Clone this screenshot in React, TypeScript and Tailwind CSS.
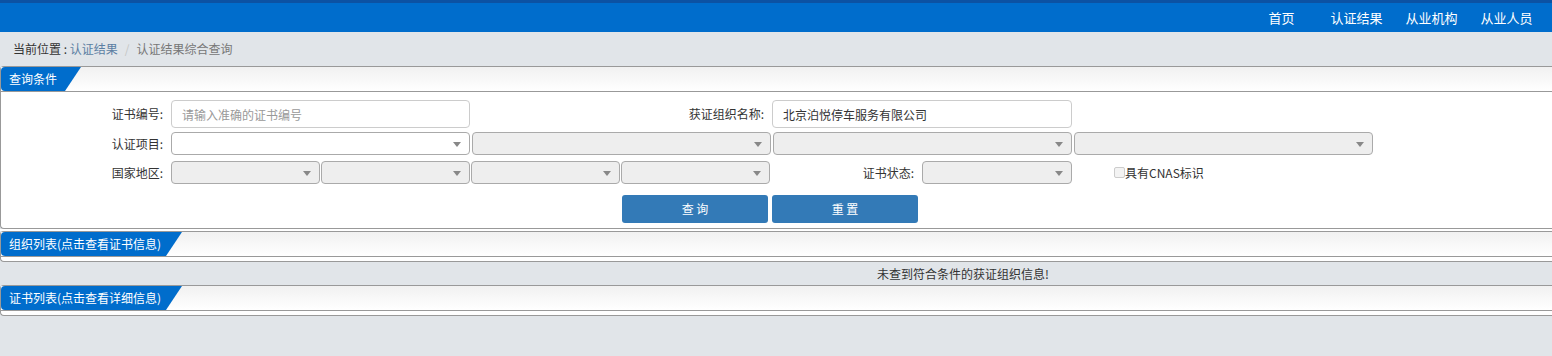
const font = { fontFamily: '"Noto Sans CJK SC", "Liberation Sans", sans-serif' }

function Select({ width, disabled = true }: { width: string; disabled?: boolean }) {
  return (
    <div
      className={`relative h-[23px] shrink-0 rounded-[4px] border border-[#aaa] ${width} ${
        disabled ? 'bg-[#eee]' : 'bg-white'
      }`}
    >
      <span className="absolute right-[8px] top-[9px] h-0 w-0 border-x-[4px] border-t-[5px] border-x-transparent border-t-[#888]" />
    </div>
  )
}

function PanelHeader({ title, tabWidth }: { title: string; tabWidth: string }) {
  return (
    <div className="flex h-[25px] border-b border-[#999] bg-gradient-to-b from-[#f1f1f1] to-white">
      <div
        className={`flex h-full items-center rounded-l-[4px] bg-[#006dcc] pl-[8px] text-[12px] text-white [clip-path:polygon(0_0,100%_0,calc(100%-16px)_100%,0_100%)] ${tabWidth}`}
      >
        {title}
      </div>
    </div>
  )
}

export default function App() {
  return (
    <div className="min-h-[356px] w-full bg-[#e1e5e9] text-[12px] text-[#333]" style={font}>
      <header className="border-t-[3px] border-[#0c52a3] bg-[#006dcc]">
        <nav className="flex h-[29px] items-center justify-end pr-[8px] text-[13px] text-white">
          <a className="w-[75px] text-center">首页</a>
          <a className="w-[75px] text-center">认证结果</a>
          <a className="w-[75px] text-center">从业机构</a>
          <a className="w-[75px] text-center">从业人员</a>
        </nav>
      </header>

      <div className="flex h-[34px] items-center pl-[13px] text-[12px]">
        <span className="text-[#333]">当前位置 :&nbsp;</span>
        <a className="text-[#5c7fa3]">认证结果</a>
        <span className="px-[7px] text-[#c5c5c5]">/</span>
        <span className="text-[#777]">认证结果综合查询</span>
      </div>

      <section className="rounded-l-[4px] border-y border-l border-[#999] bg-white">
        <PanelHeader title="查询条件" tabWidth="w-[80px]" />
        <div className="flex flex-col pb-[5px] pt-[8px]">
          <div className="flex h-[28px] items-center">
            <label className="w-[162px] text-right">证书编号:</label>
            <input
              className="ml-[8px] h-[28px] w-[299px] rounded-[4px] border border-[#ccc] px-[10px] text-[12px] outline-none placeholder:text-[#999]"
              placeholder="请输入准确的证书编号"
            />
            <label className="w-[294px] text-right">获证组织名称:</label>
            <input
              className="ml-[8px] h-[28px] w-[300px] rounded-[4px] border border-[#ccc] px-[10px] text-[12px] text-[#333] outline-none"
              defaultValue="北京泊悦停车服务有限公司"
            />
          </div>

          <div className="mt-[4px] flex items-center">
            <label className="w-[162px] text-right">认证项目:</label>
            <div className="ml-[8px] flex gap-[2px]">
              <Select width="w-[299px]" disabled={false} />
              <Select width="w-[299px]" />
              <Select width="w-[299px]" />
              <Select width="w-[299px]" />
            </div>
          </div>

          <div className="mt-[6px] flex items-center">
            <label className="w-[162px] text-right">国家地区:</label>
            <div className="ml-[8px] flex gap-[1px]">
              <Select width="w-[149px]" />
              <Select width="w-[149px]" />
              <Select width="w-[149px]" />
              <Select width="w-[149px]" />
            </div>
            <label className="w-[144px] text-right">证书状态:</label>
            <div className="ml-[8px]">
              <Select width="w-[150px]" />
            </div>
            <label className="ml-[42px] flex items-center">
              <span className="h-[11px] w-[11px] rounded-[2px] border border-[#ccc] bg-[#f3f3f3]" />
              <span>具有CNAS标识</span>
            </label>
          </div>

          <div className="ml-[621px] mt-[11px] flex gap-[4px]">
            <button className="h-[28px] w-[146px] rounded-[3px] bg-[#337ab7] text-[12px] text-white">
              查 询
            </button>
            <button className="h-[28px] w-[146px] rounded-[3px] bg-[#337ab7] text-[12px] text-white">
              重 置
            </button>
          </div>
        </div>
      </section>

      <div className="h-[2px] bg-white" />

      <section className="rounded-l-[4px] border-y border-l border-[#999] bg-white">
        <PanelHeader title="组织列表(点击查看证书信息)" tabWidth="w-[181px]" />
        <div className="h-[4px]" />
      </section>

      <div className="flex h-[23px] items-center pl-[877px]">未查到符合条件的获证组织信息!</div>

      <section className="rounded-l-[4px] border-y border-l border-[#999] bg-white">
        <PanelHeader title="证书列表(点击查看详细信息)" tabWidth="w-[181px]" />
        <div className="h-[4px]" />
      </section>
    </div>
  )
}
